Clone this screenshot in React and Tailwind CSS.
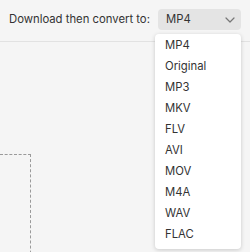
import React from "react";

const formats = ["MP4", "Original", "MP3", "MKV", "FLV", "AVI", "MOV", "M4A", "WAV", "FLAC"];

const App = () => {
  return (
    <div
      className="w-[250px] h-[252px] overflow-hidden bg-[#f5f5f5] text-[#2b2b2b] relative"
      style={{ fontFamily: "Inter, 'Noto Sans', sans-serif" }}
    >
      {/* Header row */}
      <div className="h-[42px] flex items-start pt-[9px] pl-[9px] pr-[9px] border-b border-[#e2e2e2]">
        <span className="text-[11.3px] leading-[21px] text-[#333] whitespace-nowrap">Download then convert to:</span>
        <div className="ml-auto w-[83px] h-[21px] rounded-[4px] bg-[#e4e4e4] flex items-center pl-[8px] pr-[6px]">
          <span className="text-[11.3px] text-[#333]">MP4</span>
          <svg className="ml-auto" width="10" height="6" viewBox="0 0 10 6" fill="none">
            <path d="M1 1l4 4 4-4" stroke="#777" strokeWidth="1.2" strokeLinecap="round" strokeLinejoin="round" />
          </svg>
        </div>
      </div>

      {/* Drop zone peek */}
      <div className="mt-[112px] w-[31px] h-[120px] border-t border-r border-dashed border-[#9a9a9a]" />

      {/* Dropdown menu */}
      <div className="absolute left-[155px] top-[34px] w-[86px] bg-white rounded-[4px] shadow-[0_1px_4px_rgba(0,0,0,0.18)] pt-[1px] pb-[4px]">
        {formats.map((f) => (
          <div key={f} className="h-[21px] flex items-center pl-[10px] text-[11.3px] text-[#333]">
            {f}
          </div>
        ))}
      </div>
    </div>
  );
};

export default App;
